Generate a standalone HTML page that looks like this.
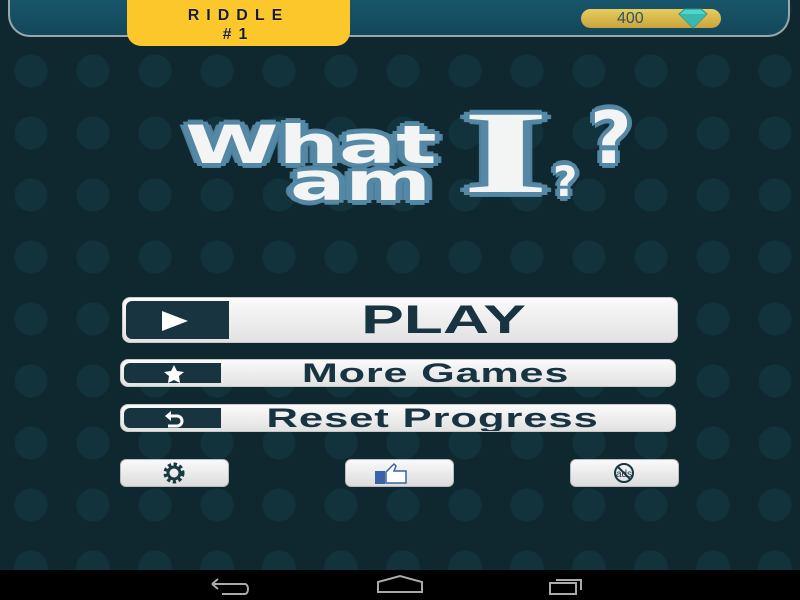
<!DOCTYPE html>
<html><head><style>
*{margin:0;padding:0;box-sizing:border-box}
html,body{width:800px;height:600px;overflow:hidden}
body{position:relative;background:#0f2830;font-family:"Liberation Sans",sans-serif;
background-image:radial-gradient(ellipse at 50% 50%,#12323c 0 16px,transparent 17px);background-size:62px 62px;background-position:0 40px}
.top{position:absolute;left:8px;top:-10px;width:782px;height:47px;border:2px solid #9aa7ab;border-top:none;border-radius:0 0 22px 22px;background:linear-gradient(#1a5a70,#14475a)}
.tab{position:absolute;left:127px;top:0;width:223px;height:46px;background:#fcc72a;border-radius:0 0 14px 14px;text-align:center;font-weight:bold;color:#1b1b1b;font-size:16px;letter-spacing:7px;line-height:19px;padding-top:6px;text-shadow:0 0 1px #fff}
.coin{position:absolute;left:581px;top:9px;width:140px;height:19px;border-radius:10px;background:linear-gradient(#e6cc60,#c9a53a);color:#2f5560;font-size:16px;line-height:19px;padding-left:36px}
.ttl{position:absolute;font-family:"DejaVu Sans",sans-serif;font-weight:bold;color:#f3f5f5;transform-origin:0 0;
text-shadow:3px 3px 0 #5588a5,-3px -3px 0 #5588a5,3px -3px 0 #5588a5,-3px 3px 0 #5588a5,0 4px 0 #5588a5,4px 0 0 #5588a5,-4px 0 0 #5588a5,0 -4px 0 #5588a5,0 5px 0 #4d7f9a,5px 0 0 #4d7f9a,-5px 0 0 #4d7f9a,0 -5px 0 #4d7f9a}
.btn{position:absolute;border-radius:8px;background:linear-gradient(#fafafa,#e2e2e2);border:1px solid #c8c8c8;overflow:hidden;color:#173440;font-weight:bold;text-align:center;font-family:"Liberation Sans",sans-serif}
.btn span{display:inline-block}
.btn .l{position:absolute;left:3px;top:3px;bottom:3px;background:#173440;border-radius:6px 0 0 6px;color:#fff}
.sb{position:absolute;top:459px;width:109px;height:28px;border-radius:6px;background:linear-gradient(#fafafa,#dcdcdc);border:1px solid #bbb}
.nav{position:absolute;left:0;top:570px;width:800px;height:30px;background:#000}
</style></head><body>
<div class="top"></div>
<div class="coin">400<svg style="position:absolute;left:92px;top:-1px" width="40" height="21"><polygon points="6,6 12,1 28,1 34,6 20,20" fill="#4ed6c8" stroke="#2a8a86"/><polygon points="6,6 34,6 20,20" fill="#38b8ae"/></svg></div>
<div class="tab">RIDDLE<br>#1</div>
<div class="ttl" style="left:185px;top:116px;font-size:53px;line-height:60px;transform:scaleX(1.6)">What</div>
<div class="ttl" style="left:290px;top:153px;font-size:53px;line-height:60px;transform:scaleX(1.55)">am</div>
<div class="ttl" style="left:462px;top:98px;font-family:'Liberation Serif',serif;font-size:118px;line-height:110px;transform:scaleX(1.9)">I</div>
<div class="ttl" style="left:590px;top:100px;font-size:72px;line-height:76px">?</div>
<div class="ttl" style="left:553px;top:160px;font-size:42px;line-height:44px">?</div>
<div class="btn" style="left:122px;top:297px;width:556px;height:46px;font-size:40px;line-height:44px;padding-left:88px"><span style="transform:scaleX(1.6)">PLAY</span><div class="l" style="width:103px"><svg width="100" height="40"><polygon points="34,10 34,30 60,20" fill="#fff"/></svg></div></div>
<div class="btn" style="left:120px;top:359px;width:556px;height:28px;font-size:27px;line-height:27px;padding-left:76px"><span style="transform:scaleX(1.6);letter-spacing:0.5px">More Games</span><div class="l" style="width:97px"><svg width="97" height="22"><polygon points="50,2 53,8 60,9 55,13 56,20 50,17 44,20 45,13 40,9 47,8" fill="#fff"/></svg></div></div>
<div class="btn" style="left:120px;top:404px;width:556px;height:28px;font-size:27px;line-height:27px;padding-left:70px"><span style="transform:scaleX(1.62);letter-spacing:0.5px">Reset Progress</span><div class="l" style="width:97px"><svg width="97" height="22"><path d="M43 8 H53 A5 5 0 0 1 53 18 H44" fill="none" stroke="#fff" stroke-width="3"/><polygon points="41,8 47,3 47,13" fill="#fff"/></svg></div></div>
<div class="sb" style="left:120px"><svg width="107" height="26"><circle cx="53" cy="13" r="8" fill="none" stroke="#173a40" stroke-width="5" stroke-dasharray="3 2.3"/><circle cx="53" cy="13" r="6" fill="none" stroke="#173a40" stroke-width="3"/></svg></div>
<div class="sb" style="left:345px"><svg width="107" height="26"><rect x="29" y="11" width="10" height="13" fill="#3a62a8"/><path d="M40 12 L48 4 L50 6 L48 11 H60 V23 H40 Z" fill="#fff" stroke="#3a62a8" stroke-width="1.5"/></svg></div>
<div class="sb" style="left:570px"><svg width="107" height="26"><circle cx="53" cy="13" r="9" fill="none" stroke="#173a40" stroke-width="2"/><line x1="46" y1="6" x2="60" y2="20" stroke="#173a40" stroke-width="2"/><text x="53" y="17" font-size="10" text-anchor="middle" fill="#173a40" font-family="Liberation Sans">ads</text></svg></div>
<div class="nav"><svg width="800" height="30"><path d="M212 14 H245 M212 14 l6 -5 M212 14 l6 5 M245 14 a3 5 0 0 1 0 10 H222" fill="none" stroke="#aaa" stroke-width="2"/><path d="M378 22 V12 L400 6 L422 12 V22 Z" fill="none" stroke="#aaa" stroke-width="2"/><rect x="550" y="13" width="26" height="11" fill="none" stroke="#aaa" stroke-width="2"/><path d="M556 10 H581 V20" fill="none" stroke="#aaa" stroke-width="2"/></svg></div>
</body></html>
